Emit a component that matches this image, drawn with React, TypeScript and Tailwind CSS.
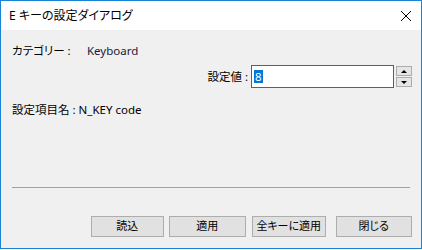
export default function App() {
  const buttons = [
    { label: "読込", w: "w-[73px]", ml: "ml-0" },
    { label: "適用", w: "w-[78px]", ml: "ml-[5px]" },
    { label: "全キーに適用", w: "w-[74px]", ml: "ml-[6px]" },
    { label: "閉じる", w: "w-[77px]", ml: "ml-[10px]" },
  ];

  return (
    <div
      className="w-[422px] h-[249px] border border-[#1883d7] bg-[#f0f0f0] flex flex-col text-[11.5px] text-black [font-feature-settings:'palt']"
      style={{ fontFamily: '"Noto Sans", "Noto Sans CJK JP", sans-serif' }}
    >
      {/* title bar */}
      <div className="h-[29px] bg-white flex items-center pl-[8px] pr-[9px] shrink-0 text-[12px]">
        <span className="flex-1">E キーの設定ダイアログ</span>
        <svg width="12" height="12" viewBox="0 0 12 12">
          <path d="M1 1 L11 11 M11 1 L1 11" stroke="#000" strokeWidth="1" />
        </svg>
      </div>

      {/* body */}
      <div className="flex-1 flex flex-col pl-[11px] pr-[9px]">
        <div className="mt-[13px] h-[16px] flex items-center">
          <span className="w-[75px]">カテゴリー :</span>
          <span className="text-[#1a1a3a]">Keyboard</span>
        </div>

        <div className="mt-[6px] h-[23px] flex items-center justify-end">
          <span className="mr-[3px]">設定値 :</span>
          <div className="w-[143px] h-[23px] border border-[#0078d7] bg-white flex items-center pl-[2px]">
            <span className="bg-[#0078d7] text-white leading-[13px] px-[1px]">8</span>
          </div>
          <div className="ml-[2px] flex flex-col gap-[1px]">
            <div className="w-[16px] h-[10px] border border-[#adadad] bg-[#e5e5e5] flex items-center justify-center">
              <svg width="6" height="3" viewBox="0 0 6 3">
                <path d="M0 3 L3 0 L6 3 Z" fill="#000" />
              </svg>
            </div>
            <div className="w-[16px] h-[10px] border border-[#adadad] bg-[#e5e5e5] flex items-center justify-center">
              <svg width="6" height="3" viewBox="0 0 6 3">
                <path d="M0 0 L6 0 L3 3 Z" fill="#000" />
              </svg>
            </div>
          </div>
        </div>

        <div className="mt-[14px] h-[16px] flex items-center">
          <span>設定項目名 : N_KEY code</span>
        </div>

        <div className="mt-[69px] h-px bg-[#a0a0a0] w-[398px]" />

        <div className="mt-[28px] flex pl-[79px]">
          {buttons.map((b) => (
            <button
              key={b.label}
              className={`${b.w} ${b.ml} h-[21px] border border-[#adadad] bg-[#e1e1e1] flex items-center justify-center text-[11px]`}
            >
              {b.label}
            </button>
          ))}
        </div>
      </div>
    </div>
  );
}
